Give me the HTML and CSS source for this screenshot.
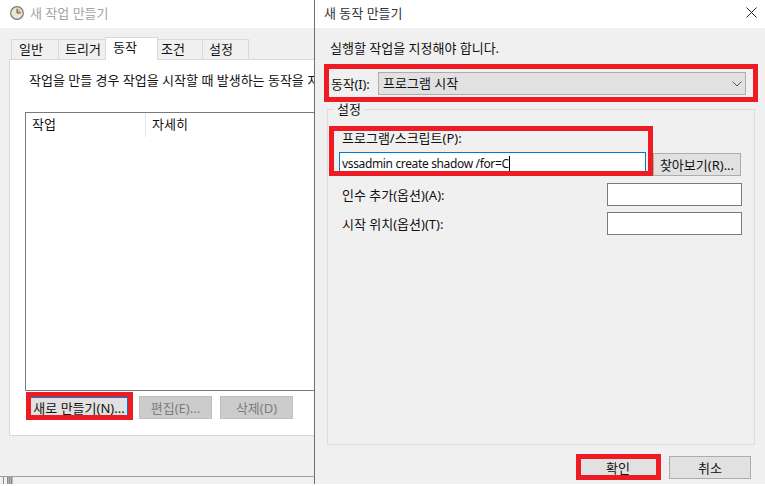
FILE: index.html
```html
<!DOCTYPE html>
<html lang="ko">
<head>
    <meta charset="UTF-8">
    <meta name="viewport" content="width=device-width, initial-scale=1.0">
    <title>새 동작 만들기</title>
    <link rel="stylesheet" href="styles.css">
</head>
<body>
    <!-- 뒤쪽 창: 새 작업 만들기 -->
    <section class="window task-window">
        <header class="titlebar">
            <svg class="clock" width="14" height="14" viewBox="0 0 14 14">
                <circle cx="7" cy="7" r="6.3" fill="#e9e4d6" stroke="#77787a" stroke-width="1.2"/>
                <path d="M7 7V2.6A4.4 4.4 0 0 1 11.4 7z" fill="#e0bd72"/>
                <path d="M7 2.8V7h3.6" fill="none" stroke="#55575a" stroke-width="1"/>
            </svg>
            <span class="title-muted">새 작업 만들기</span>
        </header>
        <div class="task-body">
            <nav class="tabs">
                <span class="tab tab-first">일반</span>
                <span class="tab tab-trigger">트리거</span>
                <span class="tab tab-active">동작</span>
                <span class="tab tab-cond">조건</span>
                <span class="tab tab-set">설정</span>
            </nav>
            <div class="tab-panel">
                <p class="panel-text">작업을 만들 경우 작업을 시작할 때 발생하는 동작을 지정해야 합니다.</p>
                <div class="action-list">
                    <div class="list-head">
                        <span class="col-action">작업</span>
                        <span class="col-detail">자세히</span>
                    </div>
                </div>
                <div class="list-buttons">
                    <button class="btn btn-new">새로 만들기(N)...</button>
                    <button class="btn btn-off">편집(E)...</button>
                    <button class="btn btn-off">삭제(D)</button>
                </div>
            </div>
        </div>
        <div class="task-foot">
            <i class="foot-bar"></i>
            <i class="foot-grip"></i>
        </div>
    </section>

    <!-- 앞쪽 창: 새 동작 만들기 -->
    <section class="window action-window">
        <header class="titlebar">
            <span>새 동작 만들기</span>
            <svg class="close" width="11" height="11" viewBox="0 0 11 11">
                <path d="M.5.5l10 10M10.5.5l-10 10" stroke="#222" stroke-width="1"/>
            </svg>
        </header>
        <div class="action-body">
            <p class="intro">실행할 작업을 지정해야 합니다.</p>
            <div class="action-row">
                <label class="action-label">동작(I):</label>
                <div class="select">
                    <span class="select-text">프로그램 시작</span>
                    <svg width="10" height="6" viewBox="0 0 10 6">
                        <path d="M.5.5L5 5 9.5.5" fill="none" stroke="#555" stroke-width="1"/>
                    </svg>
                </div>
            </div>
            <fieldset class="settings">
                <legend>설정</legend>
                <div class="field-label">프로그램/스크립트(P):</div>
                <div class="program-row">
                    <div class="input input-focus">vssadmin create shadow /for=C<i class="caret"></i></div>
                    <button class="btn btn-browse">찾아보기(R)...</button>
                </div>
                <div class="option-row">
                    <span>인수 추가(옵션)(A):</span>
                    <div class="input input-small"></div>
                </div>
                <div class="option-row">
                    <span>시작 위치(옵션)(T):</span>
                    <div class="input input-small"></div>
                </div>
            </fieldset>
            <div class="dialog-buttons">
                <button class="btn btn-dialog">확인</button>
                <button class="btn btn-dialog">취소</button>
            </div>
        </div>
    </section>

    <!-- 빨간 강조 표시 -->
    <div class="mark mark-new"></div>
    <div class="mark mark-action"></div>
    <div class="mark mark-program"></div>
    <div class="mark mark-ok"></div>
</body>
</html>
```

FILE: styles.css
```css
* {
    box-sizing: border-box;
}

html, body {
    margin: 0;
    height: 486px;
    overflow: hidden;
}

body {
    position: relative;
    background: #fff;
    font-family: "Noto Sans", "Noto Sans CJK KR", sans-serif;
    font-size: 13px;
    line-height: 16px;
    color: #111;
}

p {
    margin: 0;
}

.window {
    position: absolute;
    top: 0;
    display: flex;
    flex-direction: column;
    height: 484px;
    background: #f0f0f0;
    overflow: hidden;
}

.task-window {
    left: 0;
    width: 315px;
    border-right: 1px solid #6e6e6e;
}

.action-window {
    left: 315px;
    width: 450px;
}

.titlebar {
    display: flex;
    align-items: center;
    flex: none;
    height: 28px;
    background: #fff;
    padding: 0 0 3px 10px;
    color: #333;
}

.title-muted {
    margin-left: 6px;
    color: #a3a3a3;
}

.action-window .titlebar {
    justify-content: space-between;
    padding: 0 8px 3px 9px;
}

/* 탭 */
.task-body {
    padding: 9px 0 0 9px;
}

.tabs {
    display: flex;
    align-items: flex-end;
    height: 22px;
    padding-left: 2px;
}

.tab {
    height: 20px;
    border: 1px solid #d9d9d9;
    border-bottom: 0;
    margin-right: -1px;
    padding-left: 7px;
    line-height: 18px;
    background: #f0f0f0;
}

.tab-first {
    width: 48px;
}

.tab-trigger {
    width: 48px;
    padding-left: 6px;
}

.tab-active {
    position: relative;
    z-index: 1;
    width: 53px;
    height: 23px;
    background: #fff;
    line-height: 19px;
    margin-bottom: -1px;
}

.tab-cond {
    width: 46px;
    padding-left: 3px;
}

.tab-set {
    width: 47px;
    padding-left: 6px;
}

.tab-panel {
    height: 377px;
    width: 320px;
    background: #fff;
    border: 1px solid #d9d9d9;
    padding: 12px 0 0 15px;
}

.panel-text {
    margin-left: 4px;
    white-space: nowrap;
}

.action-list {
    margin-top: 24px;
    height: 279px;
    border: 1px solid #7a7a7a;
}

.list-head {
    display: flex;
    height: 24px;
    line-height: 22px;
}

.col-action {
    width: 120px;
    padding-left: 6px;
    border-right: 1px solid #e5e5e5;
}

.col-detail {
    padding-left: 6px;
}

.list-buttons {
    display: flex;
    gap: 8px;
    margin: 5px 0 0 5px;
}

/* 버튼 */
.btn {
    height: 23px;
    font: inherit;
    color: #111;
    background: #e1e1e1;
    border: 1px solid #adadad;
    padding: 0;
    white-space: nowrap;
}

.btn-new {
    width: 98px;
    height: 22px;
    margin: 1px 3px 0 0;
    border-color: #0078d7;
}

.btn-off {
    width: 73px;
    background: #cccccc;
    border-color: #bfbfbf;
    color: #7d7d7d;
}

/* 왼쪽 창 아래 줄 */
.task-foot {
    display: flex;
    flex: none;
    height: 8px;
    margin-top: auto;
    padding-left: 3px;
    border-top: 1px solid #a0a0a0;
}

.foot-bar {
    width: 1px;
    background: #8c8c8c;
}

.foot-grip {
    width: 6px;
    margin-left: 3px;
    background: repeating-linear-gradient(90deg, #8c8c8c 0 1px, #b5b5b5 1px 2px);
}

/* 새 동작 만들기 내용 */
.action-body {
    padding: 12px 10px 0 12px;
}

.intro {
    margin-left: 3px;
}

.action-row {
    display: flex;
    align-items: center;
    height: 23px;
    margin-top: 16px;
    padding-left: 4px;
}

.action-label {
    width: 47px;
    white-space: nowrap;
    letter-spacing: -0.2px;
}

.select {
    display: flex;
    align-items: center;
    justify-content: space-between;
    width: 368px;
    height: 23px;
    padding: 0 3px 0 4px;
    background: #e1e1e1;
    border: 1px solid #adadad;
}

.select-text {
    margin-bottom: 2px;
}

.settings {
    height: 344px;
    width: 428px;
    margin: 6px 0 0 0;
    padding: 13px 12px 0 14px;
    border: 1px solid #dcdcdc;
}

.settings legend {
    margin-left: -8px;
    padding: 0 3px;
}

.field-label {
    height: 22px;
}

.program-row {
    display: flex;
    gap: 7px;
    height: 24px;
    margin-left: -3px;
}

.input {
    background: #fff;
    border: 1px solid #7a7a7a;
    height: 23px;
}

.input-focus {
    display: flex;
    align-items: center;
    width: 307px;
    padding-left: 2px;
    border-color: #0078d7;
    font-size: 12px;
    letter-spacing: -0.35px;
}

.caret {
    width: 1px;
    height: 15px;
    background: #000;
}

.btn-browse {
    width: 88px;
    margin-top: 1px;
}

.option-row {
    display: flex;
    align-items: center;
    justify-content: space-between;
    height: 23px;
    margin-top: 6px;
}

.program-row + .option-row {
    margin-top: 7px;
}

.input-small {
    width: 135px;
}

.dialog-buttons {
    display: flex;
    justify-content: flex-end;
    gap: 10px;
    margin: 11px 4px 0 0;
}

.btn-dialog {
    width: 82px;
}

/* 빨간 강조 표시 */
.mark {
    position: absolute;
    border: 5px solid #ed1c24;
}

.mark-new {
    left: 26px;
    top: 392px;
    width: 107px;
    height: 28px;
}

.mark-action {
    left: 324px;
    top: 64px;
    width: 434px;
    height: 38px;
}

.mark-program {
    left: 329px;
    top: 126px;
    width: 324px;
    height: 50px;
}

.mark-ok {
    left: 576px;
    top: 454px;
    width: 85px;
    height: 26px;
}
```
